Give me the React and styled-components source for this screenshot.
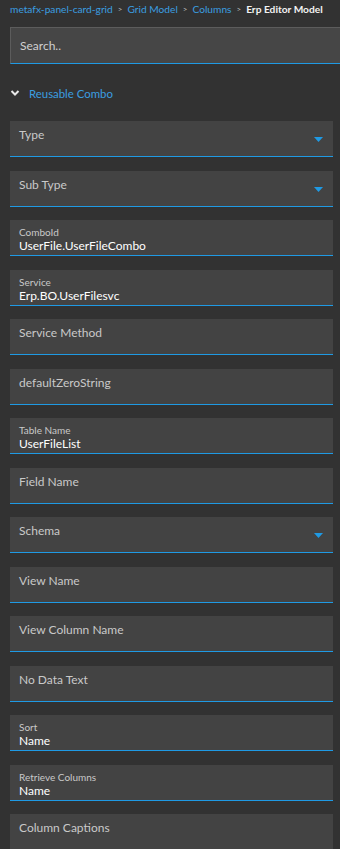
import React from 'react';
import styled, { createGlobalStyle } from 'styled-components';

const GlobalStyle = createGlobalStyle`
  html, body {
    margin: 0;
    padding: 0;
    background: #323232;
  }
  body {
    font-family: Lato, "Open Sans", sans-serif;
  }
`;

// page wrapper
const Page = styled.div`
  width: 340px;
  height: 849px;
  overflow: hidden;
  background: #323232;
  padding-left: 10px;
  box-sizing: border-box;
`;

const Crumbs = styled.div`
  display: flex;
  align-items: center;
  gap: 5px;
  height: 17px;
  font-size: 10.2px;
  white-space: nowrap;
`;

const Crumb = styled.span`
  color: ${(p) => (p.current ? '#f2f2f2' : '#3b9ee0')};
  font-weight: ${(p) => (p.current ? 700 : 400)};
`;

const Sep = styled.span`
  color: #bfbfbf;
  font-size: 8px;
`;

const Search = styled.div`
  margin-top: 10px;
  height: 35px;
  background: #464646;
  border-top: 1px solid #5c5c5c;
  border-left: 1px solid #5c5c5c;
  border-bottom: 1px solid #1f9ae4;
  display: flex;
  align-items: center;
  padding-left: 9px;
  color: #d0d0d0;
  font-size: 12px;
`;

const Section = styled.div`
  display: flex;
  align-items: center;
  gap: 9px;
  margin-top: 19px;
  height: 20px;
  padding-left: 0px;
  color: #3b9ee0;
  font-size: 11.4px;
`;

const List = styled.div`
  margin-top: 18px;
  display: flex;
  flex-direction: column;
  gap: 13.5px;
`;

const Field = styled.div`
  position: relative;
  width: 323px;
  height: 36px;
  box-sizing: border-box;
  background: #434343;
  border-bottom: 1px solid #1f9ae4;
  padding-left: 9px;
  display: flex;
  flex-direction: column;
`;

const Label = styled.div`
  color: #c9c9c9;
  font-size: 12px;
  margin-top: 6px;
  line-height: 16px;
`;

const SmallLabel = styled.div`
  color: #c9c9c9;
  font-size: 10px;
  line-height: 12px;
  margin-top: 6px;
`;

const Value = styled.div`
  color: #ffffff;
  font-size: 12px;
  line-height: 15px;
`;

const Caret = styled.svg`
  position: absolute;
  right: 10px;
  top: 16px;
`;

const Chevron = () => (
  <svg width="10" height="8" viewBox="0 0 10 8">
    <path d="M1.5 2 L5 5.5 L8.5 2" fill="none" stroke="#e8e8e8" strokeWidth="2" />
  </svg>
);

const fields = [
  { label: 'Type', select: true },
  { label: 'Sub Type', select: true },
  { label: 'ComboId', value: 'UserFile.UserFileCombo' },
  { label: 'Service', value: 'Erp.BO.UserFilesvc' },
  { label: 'Service Method' },
  { label: 'defaultZeroString' },
  { label: 'Table Name', value: 'UserFileList' },
  { label: 'Field Name' },
  { label: 'Schema', select: true },
  { label: 'View Name' },
  { label: 'View Column Name' },
  { label: 'No Data Text' },
  { label: 'Sort', value: 'Name' },
  { label: 'Retrieve Columns', value: 'Name' },
  { label: 'Column Captions' },
];

const App = () => {
  return (
    <Page>
      <GlobalStyle />
      <Crumbs>
        <Crumb>metafx-panel-card-grid</Crumb>
        <Sep>&gt;</Sep>
        <Crumb>Grid Model</Crumb>
        <Sep>&gt;</Sep>
        <Crumb>Columns</Crumb>
        <Sep>&gt;</Sep>
        <Crumb current>Erp Editor Model</Crumb>
      </Crumbs>
      <Search>Search..</Search>
      <Section>
        <Chevron />
        Reusable Combo
      </Section>
      <List>
        {fields.map((f) => (
          <Field key={f.label}>
            {f.value ? (
              <>
                <SmallLabel>{f.label}</SmallLabel>
                <Value>{f.value}</Value>
              </>
            ) : (
              <Label>{f.label}</Label>
            )}
            {f.select && (
              <Caret width="9" height="6" viewBox="0 0 9 6">
                <path d="M0 0 H9 L4.5 5 Z" fill="#1f9ae4" />
              </Caret>
            )}
          </Field>
        ))}
      </List>
    </Page>
  );
};

export default App;
